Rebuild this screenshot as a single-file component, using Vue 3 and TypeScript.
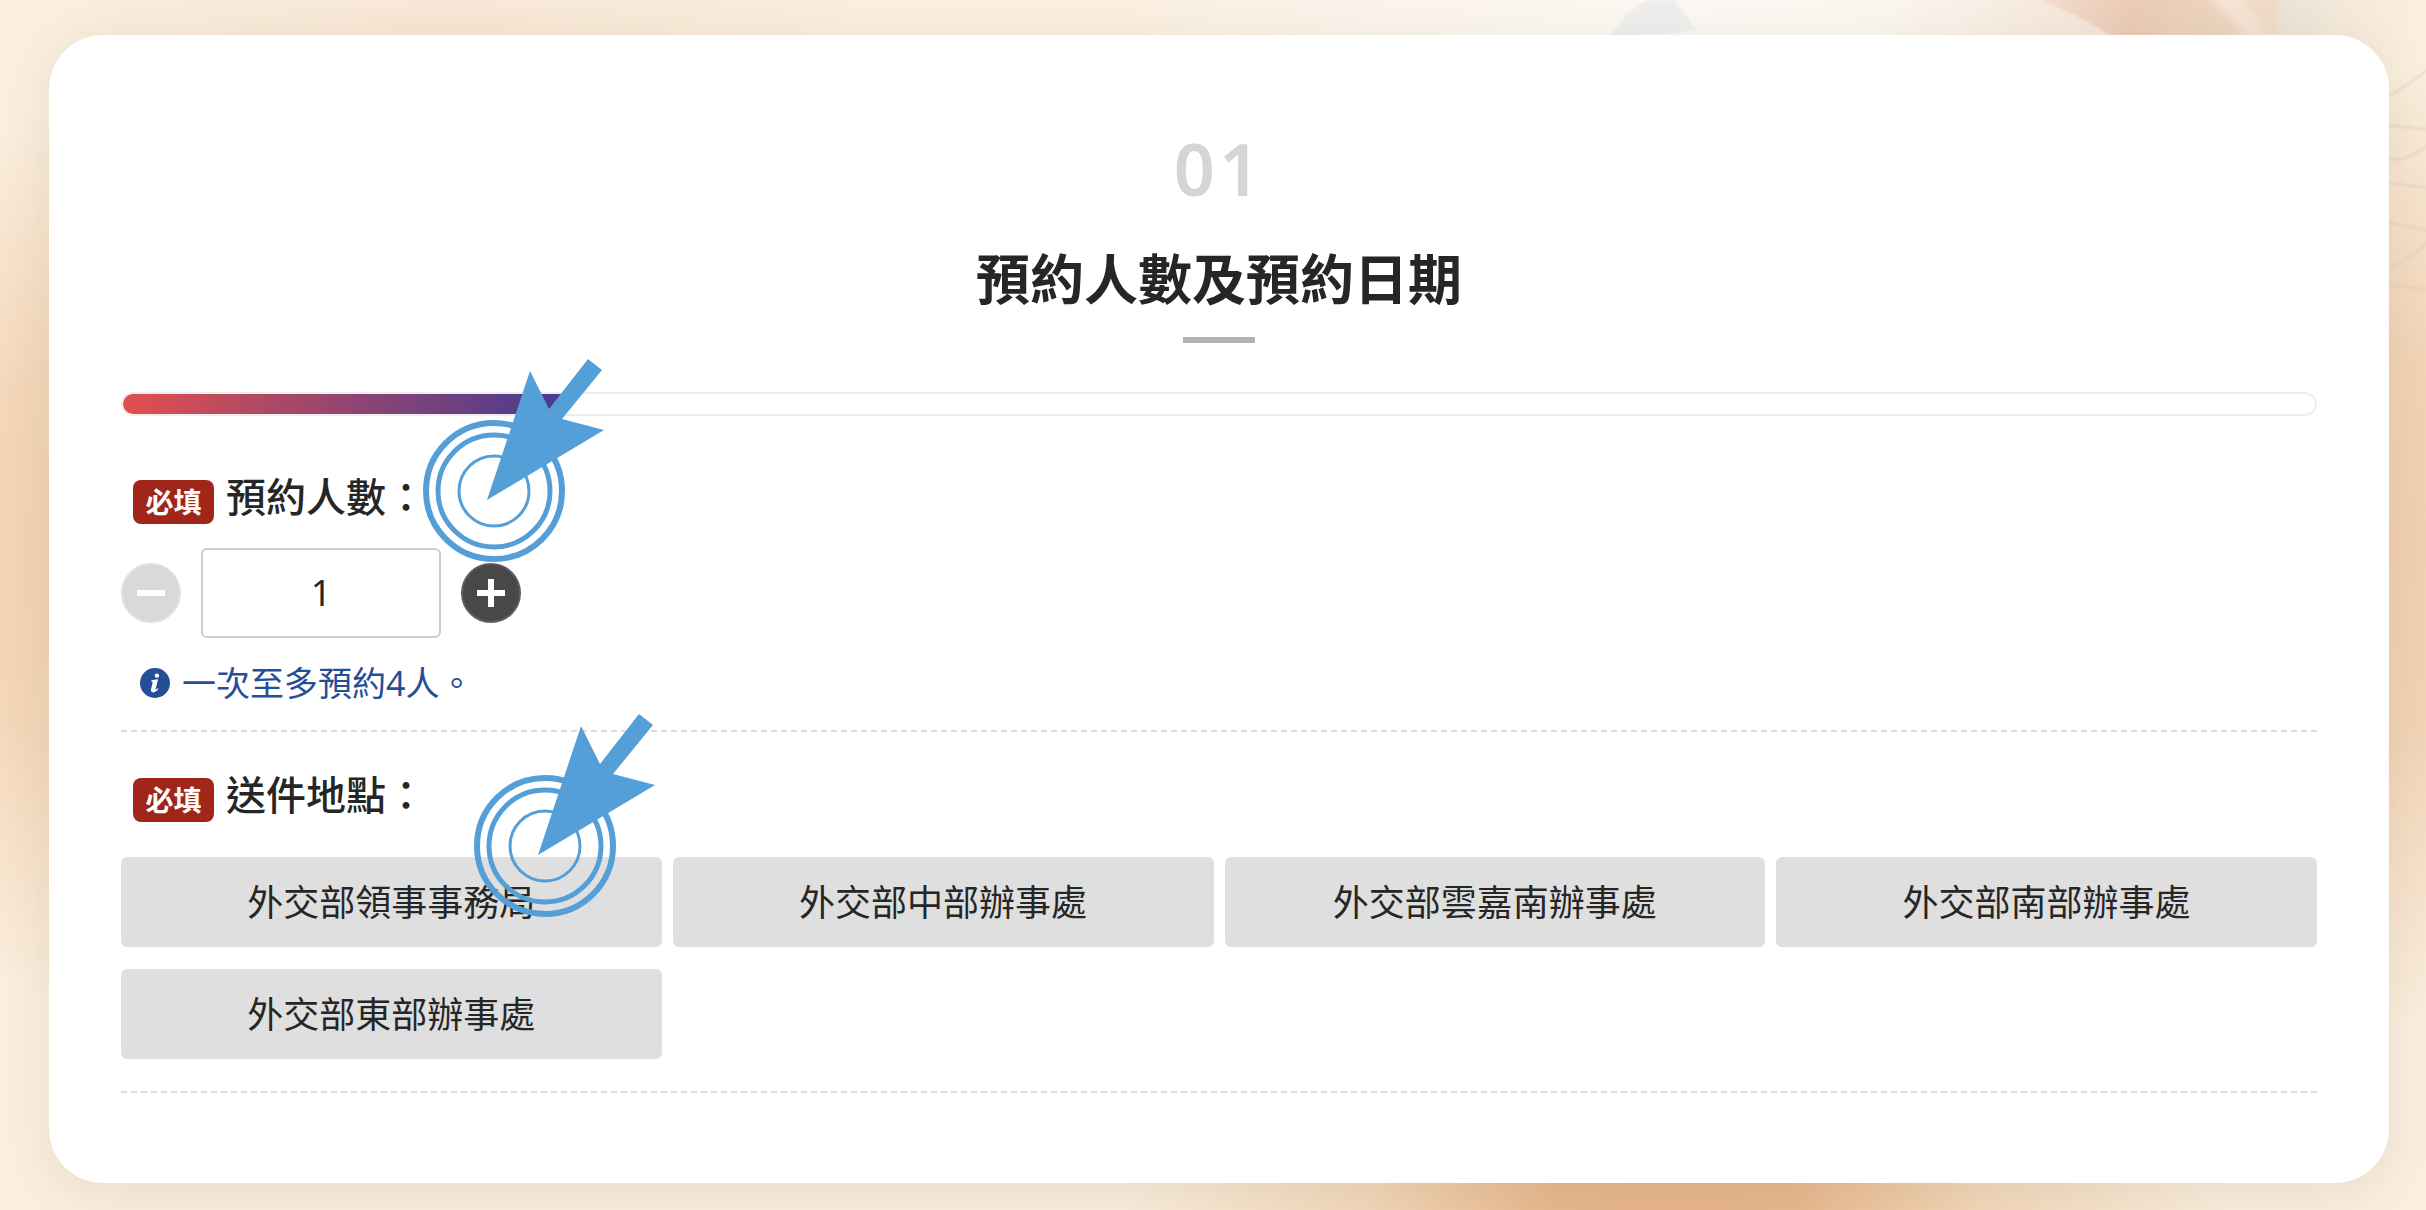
<script setup lang="ts">
import { ref } from 'vue'

const people = ref(1)
const maxPeople = 4
const progress = 20

const offices: string[] = [
  '外交部領事事務局',
  '外交部中部辦事處',
  '外交部雲嘉南辦事處',
  '外交部南部辦事處',
  '外交部東部辦事處',
]

function step(delta: number) {
  people.value = Math.min(maxPeople, Math.max(1, people.value + delta))
}
</script>

<template>
  <div class="page">
    <svg class="petals" viewBox="0 0 926 300" aria-hidden="true">
      <defs>
        <filter id="soft"><feGaussianBlur stdDeviation="3" /></filter>
        <filter id="faint"><feGaussianBlur stdDeviation="1" /></filter>
        <linearGradient id="petal" x1="0" y1="0" x2="1" y2="0">
          <stop offset="0" stop-color="#f3e0d2" />
          <stop offset="0.4" stop-color="#ebcbb5" />
          <stop offset="0.7" stop-color="#ecd3bc" />
          <stop offset="1" stop-color="#f0dcc8" />
        </linearGradient>
        <linearGradient id="blush" x1="0" y1="0" x2="1" y2="0">
          <stop offset="0" stop-color="#f6e8dd" stop-opacity="0" />
          <stop offset="1" stop-color="#f3e4d6" />
        </linearGradient>
        <linearGradient id="haze" x1="0" y1="0" x2="1" y2="0">
          <stop offset="0" stop-color="#ebe2d5" />
          <stop offset="1" stop-color="#f3e9da" stop-opacity="0" />
        </linearGradient>
      </defs>
      <path d="M380 0H620V40H380Z" fill="url(#blush)" />
      <path d="M776 0H926V60H776Z" fill="url(#haze)" />
      <path d="M112 36Q122 12 148 0L174 0Q186 14 196 30Q160 36 112 36Z" fill="#efeeed" filter="url(#faint)" />
      <path d="M530 -4L780 -10L774 50L630 50Q590 18 530 -4Z" fill="url(#petal)" filter="url(#faint)" />
      <path d="M700 -10L738 -10L776 46L756 46Q726 14 700 -10Z" fill="#f4e3d3" filter="url(#soft)" />
      <path d="M742 -4L778 -4L770 30Z" fill="#f1dac6" filter="url(#faint)" />
      <g fill="none" stroke="#dccdb9" stroke-width="2" opacity="0.6" filter="url(#faint)">
        <path d="M888 96Q904 88 930 68M888 125L930 130M888 158Q904 164 930 144M888 183L930 188M888 222L930 231M888 266Q904 266 930 240M888 285L930 290" />
      </g>
    </svg>

    <main class="card">
      <header class="heading">
        <p class="step">01</p>
        <h1 class="title">預約人數及預約日期</h1>
        <span class="rule"></span>
      </header>

      <div class="progress" role="progressbar" aria-valuemin="0" aria-valuemax="100" :aria-valuenow="progress">
        <div class="progress-fill" :style="{ width: progress + '%' }"></div>
      </div>

      <section class="field people">
        <div class="label-row">
          <span class="badge">必填</span>
          <label class="label" for="people">預約人數：</label>
        </div>
        <div class="stepper">
          <button type="button" class="round minus" aria-label="減少人數" :disabled="people <= 1" @click="step(-1)">
            <svg width="28" height="28" viewBox="0 0 28 28" aria-hidden="true"><path d="M0 14H28" /></svg>
          </button>
          <input id="people" v-model.number="people" class="count" type="text" inputmode="numeric" />
          <button type="button" class="round plus" aria-label="增加人數" @click="step(1)">
            <svg width="28" height="28" viewBox="0 0 28 28" aria-hidden="true"><path d="M0 14H28M14 0V28" /></svg>
          </button>
        </div>
        <p class="hint">
          <svg class="info" viewBox="0 0 512 512" aria-hidden="true">
            <circle cx="256" cy="256" r="256" />
            <path
              class="info-mark"
              d="M290 92a38 38 0 1 1-2 76a38 38 0 0 1 2-76zM196 208l98-14c8 0 12 6 10 14l-36 144c-2 12 2 16 8 14c8-2 16-10 24-20l14 10c-24 38-52 60-88 60c-32 0-46-20-38-52l26-106c4-18 0-26-22-28z"
            />
          </svg>
          <span>一次至多預約4人。</span>
        </p>
        <svg class="pointer" viewBox="0 0 200 220" aria-hidden="true">
          <g fill="none">
            <circle cx="74" cy="141" r="68" stroke-width="6" />
            <circle cx="74" cy="141" r="56" stroke-width="5" />
            <circle cx="74" cy="141" r="35" stroke-width="3" />
          </g>
          <path d="M67 150L110 21L129 59L168 9L182 20L142 69L184 80Z" />
        </svg>
      </section>

      <section class="field">
        <div class="label-row">
          <span class="badge">必填</span>
          <span id="office-label" class="label">送件地點：</span>
        </div>
        <div class="offices" role="group" aria-labelledby="office-label">
          <button v-for="office in offices" :key="office" type="button" class="office">{{ office }}</button>
        </div>
        <svg class="pointer second" viewBox="0 0 200 220" aria-hidden="true">
          <g fill="none">
            <circle cx="74" cy="141" r="68" stroke-width="6" />
            <circle cx="74" cy="141" r="56" stroke-width="5" />
            <circle cx="74" cy="141" r="35" stroke-width="3" />
          </g>
          <path d="M67 150L110 21L129 59L168 9L182 20L142 69L184 80Z" />
        </svg>
      </section>
    </main>
  </div>
</template>

<style>
body {
  margin: 0;
}
</style>

<style scoped>
.page {
  position: relative;
  box-sizing: border-box;
  min-height: 100vh;
  padding: 35px 37px 27px 49px;
  overflow: hidden;
  color: #262626;
  font-family: "Noto Sans", "Noto Sans CJK TC", sans-serif;
  background:
    radial-gradient(560px 300px at 69% 100%, #e8b589 0%, #e9b88d 22%, rgba(240, 205, 170, 0.7) 55%, rgba(245, 230, 210, 0) 100%),
    radial-gradient(240px 440px at 60px 46%, #f3d2b2 0%, #f4d6b8 40%, rgba(250, 236, 220, 0) 100%),
    radial-gradient(240px 480px at 98% 45%, #f1cfad 0%, #f2d3b5 40%, rgba(250, 236, 220, 0) 100%),
    radial-gradient(420px 120px at 450px 40px, #f8e5d3 0%, rgba(250, 236, 220, 0) 100%),
    radial-gradient(620px 160px at 70% 0, #fdf8f4 0%, #fbf4ec 50%, rgba(250, 240, 224, 0) 100%),
    #faeedd;
}

.petals {
  position: absolute;
  top: 0;
  right: 0;
  width: 926px;
  height: 300px;
}

.card {
  position: relative;
  box-sizing: border-box;
  padding: 87px 72px 90px;
  border-radius: 54px;
  background: #fff;
  box-shadow: 0 10px 50px rgba(70, 80, 60, 0.1);
}

.heading {
  display: flex;
  flex-direction: column;
  align-items: center;
}

.step {
  margin: 0;
  color: #d5d5d5;
  font-size: 72px;
  font-weight: 600;
  line-height: 92px;
  letter-spacing: 4px;
}

.title {
  margin: 25px 0 0;
  font-size: 54px;
  font-weight: 700;
  line-height: 80px;
}

.rule {
  width: 72px;
  height: 6px;
  margin-top: 18px;
  background: #b2b2b2;
}

.progress {
  box-sizing: border-box;
  height: 24px;
  margin-top: 49px;
  overflow: hidden;
  border: 2px solid #eee;
  border-radius: 12px;
}

.progress-fill {
  height: 100%;
  background: linear-gradient(90deg, #e14f4f, #473c90);
}

.field {
  position: relative;
  padding: 28px 0 32px;
  border-bottom: 2px dashed #dcdcdc;
}

.field.people {
  margin-top: 18px;
  padding-bottom: 22px;
}

.label-row {
  display: flex;
  gap: 12px;
  padding: 0 12px;
}

.badge {
  box-sizing: border-box;
  width: 81px;
  height: 44px;
  margin-top: 18px;
  border-radius: 8px;
  color: #fff;
  font-size: 28px;
  font-weight: 700;
  line-height: 44px;
  text-align: center;
  background: #a0261a;
}

.label {
  font-size: 40px;
  font-weight: 500;
  line-height: 70px;
}

.stepper {
  display: flex;
  align-items: center;
  gap: 20px;
  margin-top: 16px;
}

.round {
  display: flex;
  align-items: center;
  justify-content: center;
  box-sizing: border-box;
  width: 60px;
  height: 60px;
  padding: 0;
  border: 2px solid #5f5a63;
  border-radius: 50%;
  background: #484848;
}

.round svg {
  fill: none;
  stroke: #fff;
  stroke-width: 6;
}

.round.minus:disabled {
  border-color: #e0e0e0;
  background: #d9d9d9;
}

.count {
  box-sizing: border-box;
  width: 240px;
  height: 90px;
  padding: 0 0 2px;
  border: 2px solid #ccc;
  border-radius: 6px;
  color: #262626;
  font: inherit;
  font-size: 36px;
  text-align: center;
  background: #fff;
}

.hint {
  display: flex;
  align-items: center;
  gap: 12px;
  margin: 20px 0 0;
  padding-left: 19px;
  color: #264e96;
  font-size: 34px;
  line-height: 50px;
}

.info {
  width: 30px;
  height: 30px;
  fill: #264e96;
}

.info-mark {
  fill: #fff;
}

.offices {
  display: grid;
  grid-template-columns: repeat(4, 1fr);
  gap: 22px 11px;
  margin-top: 27px;
}

.office {
  height: 90px;
  padding: 0 0 4px;
  border: 0;
  border-radius: 6px;
  color: #262626;
  font: inherit;
  font-size: 36px;
  background: #dfdfdf;
}

.pointer {
  position: absolute;
  top: -84px;
  left: 299px;
  width: 200px;
  height: 220px;
  fill: #549fd7;
  stroke: #549fd7;
  stroke-width: 0;
  pointer-events: none;
}

.pointer.second {
  top: -27px;
  left: 350px;
}
</style>
